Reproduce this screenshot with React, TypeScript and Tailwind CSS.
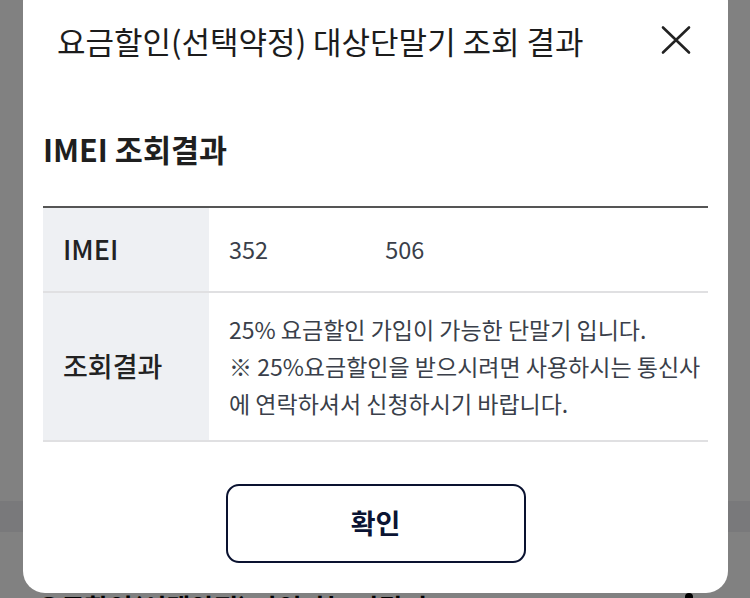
import React from "react";

const font = { fontFamily: '"Noto Sans CJK KR", "Noto Sans", sans-serif' };

function CloseIcon() {
  return (
    <svg width="30" height="30" viewBox="0 0 30 30" fill="none">
      <path d="M2 2.5 L28 27.5 M28 2.5 L2 27.5" stroke="#222" strokeWidth="2.6" strokeLinecap="round" />
    </svg>
  );
}

export default function App() {
  return (
    <div style={font} className="relative h-[598px] w-[750px] overflow-hidden bg-[#818181]">
      {/* page behind the dimmed overlay */}
      <div className="flex flex-col">
        <div className="h-[501px] shrink-0" />
        <div className="h-[31px] shrink-0 bg-[#79797b]" />
        <div className="h-[60px] shrink-0" />
        <div className="flex shrink-0 items-start justify-between px-[37px]">
          <span className="whitespace-nowrap text-[26px] font-bold leading-[30px] text-black">요금할인(선택약정) 가입가능 단말기</span>
          <span className="mr-[20px] mt-[1px] h-[8px] w-[8px] rounded-full bg-black" />
        </div>
      </div>

      {/* modal */}
      <div className="absolute left-[23px] top-[-20px] flex h-[613px] w-[705px] flex-col rounded-[22px] bg-white">
        <div className="flex items-start justify-between pl-[34px] pr-[37px] pt-[41px]">
          <h2 className="whitespace-nowrap text-[31px] font-normal leading-[40px] text-[#1c1c1c]">
            요금할인(선택약정) 대상단말기 조회 결과
          </h2>
          <button className="mt-[4px]">
            <CloseIcon />
          </button>
        </div>

        <div className="px-[20px] pt-[68px]">
          <h3 className="text-[30.5px] font-bold leading-[40px] text-[#1f1f1f]">IMEI 조회결과</h3>

          <div className="mt-[37px] border-t-2 border-[#555555]">
            <div className="flex h-[85px] border-b-2 border-[#e0e0e2]">
              <div className="flex w-[166px] items-center bg-[#eef0f3] pl-[20px] text-[27px] font-medium text-[#222]">
                IMEI
              </div>
              <div className="flex items-center gap-[117px] pl-[20px] text-[23.5px] text-[#3a3f4a]">
                <span>352</span>
                <span>506</span>
              </div>
            </div>
            <div className="flex h-[149px] border-b-2 border-[#e0e0e2]">
              <div className="flex w-[166px] items-center bg-[#eef0f3] pl-[20px] text-[27px] font-medium text-[#222]">
                조회결과
              </div>
              <div className="flex flex-1 flex-col justify-center whitespace-nowrap pl-[20px] text-[23px] leading-[37px] text-[#3a3f4a]">
                <p>25% 요금할인 가입이 가능한 단말기 입니다.</p>
                <p>※ 25%요금할인을 받으시려면 사용하시는 통신사</p>
                <p>에 연락하셔서 신청하시기 바랍니다.</p>
              </div>
            </div>
          </div>

          <div className="flex justify-center pt-[42px]">
            <button className="flex h-[79px] w-[300px] items-center justify-center rounded-[13px] border-2 border-[#0a1230] text-[27px] font-bold text-[#0b1433]">
              확인
            </button>
          </div>
        </div>
      </div>
    </div>
  );
}
